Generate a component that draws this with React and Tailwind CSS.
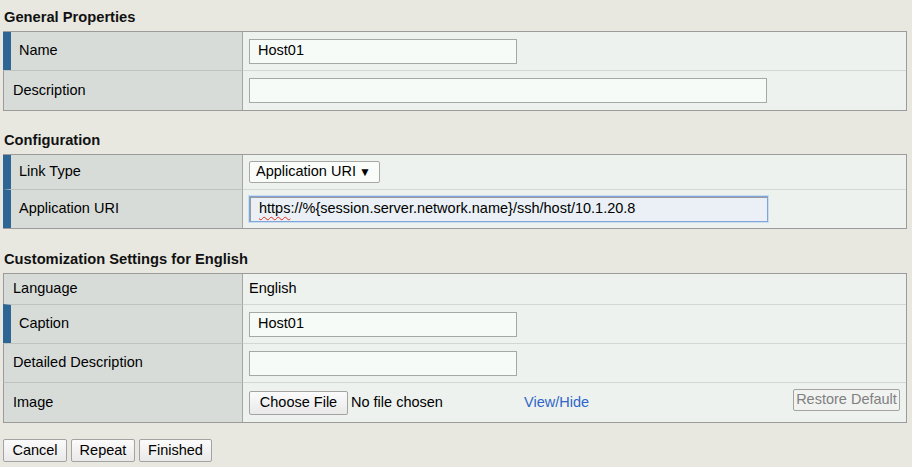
import React from "react";

const Row = ({ label, required, first, h, children, align = "items-center" }) => {
  return (
    <div className={`flex ${h}`}>
      <div
        className={`w-[240px] shrink-0 flex items-center bg-[#d8dcd9] border-r border-r-[#a4a6a4] ${
          first ? "" : "border-t border-t-[#bfc2bf]"
        } ${required ? "border-l-[8px] border-l-[#2d6595] pl-[8px]" : "border-l border-l-[#9b9b9b] pl-[9px]"}`}
      >
        {label}
      </div>
      <div className={`flex-1 flex ${align} pl-[6px] pr-[6px] bg-[#eef2ef] ${first ? "" : "border-t border-t-[#d3d7d3]"}`}>
        {children}
      </div>
    </div>
  );
};

const TextBox = ({ value, width }) => (
  <div className={`${width} h-[25px] flex items-center pl-[8px] bg-[#f7fbf7] border border-[#a6a8a6]`}>
    {value}
  </div>
);

const Button = ({ children, width, className = "" }) => (
  <button
    className={`${width} h-[23px] flex items-center justify-center border border-[#a3a3a3] rounded-[2px] bg-gradient-to-b from-[#fbfbfb] to-[#e9e9e9] text-[14.5px] text-black ${className}`}
  >
    {children}
  </button>
);

const Section = ({ title, top, children }) => (
  <div>
    <div className={top}>
      <h3 className="mb-[6px] pl-[4px] leading-[16px] text-[14.7px] font-bold text-[#111]">{title}</h3>
    </div>
    <div className="ml-[3px] w-[904px] border-t border-r border-b border-[#9b9b9b]">{children}</div>
  </div>
);

export default function App() {
  return (
    <div className="min-h-[467px] bg-[#e8e8e1] font-['Liberation_Sans',Arial,sans-serif] text-[14.5px] text-black">
      <Section title="General Properties" top="pt-[9px]">
        <Row label="Name" required first h="h-[38px]">
          <TextBox value="Host01" width="w-[268px]" />
        </Row>
        <Row label="Description" h="h-[40px]">
          <TextBox value="" width="w-[518px]" />
        </Row>
      </Section>

      <Section title="Configuration" top="pt-[21px]">
        <Row label="Link Type" required first h="h-[34px]">
          <div className="w-[131px] h-[22px] flex items-center justify-between pl-[6px] pr-[8px] bg-[#fafcfa] border border-[#a6a8a6] rounded-[2px]">
            <span>Application URI</span>
            <span className="text-[12px] leading-none">▼</span>
          </div>
        </Row>
        <Row label="Application URI" required h="h-[39px]">
          <div className="w-[519px] h-[26px] flex items-center pl-[9px] bg-[#eaf0f5] border border-[#7fa6d6] shadow-[inset_1px_1px_0_#9a9a9a,0_0_0_1px_#c9dcf1]">
            <span className="underline decoration-wavy decoration-[#e0301e] decoration-1 underline-offset-[3px]">https</span>
            <span>://%&#123;session.server.network.name&#125;/ssh/host/10.1.20.8</span>
          </div>
        </Row>
      </Section>

      <Section title="Customization Settings for English" top="pt-[22px]">
        <Row label="Language" first h="h-[30px]">
          <span>English</span>
        </Row>
        <Row label="Caption" required h="h-[39px]">
          <TextBox value="Host01" width="w-[268px]" />
        </Row>
        <Row label="Detailed Description" h="h-[39px]">
          <TextBox value="" width="w-[268px]" />
        </Row>
        <Row label="Image" h="h-[40px]">
          <div className="flex-1 h-full flex items-center">
            <Button width="w-[99px]" className="h-[24px]">Choose File</Button>
            <span className="ml-[3px] w-[173px]">No file chosen</span>
            <span className="text-[#2f66c7]">View/Hide</span>
            <div className="flex-1" />
            <div className="self-start mt-[6px] w-[107px] h-[22px] flex items-center justify-center border border-[#a3a3a3] rounded-[2px] bg-[#f1f3f1] text-[#808080]">
              Restore Default
            </div>
          </div>
        </Row>
      </Section>

      <div className="flex gap-[4px] ml-[3px] mt-[16px]">
        <Button width="w-[64px]">Cancel</Button>
        <Button width="w-[64px]">Repeat</Button>
        <Button width="w-[73px]">Finished</Button>
      </div>
    </div>
  );
}
